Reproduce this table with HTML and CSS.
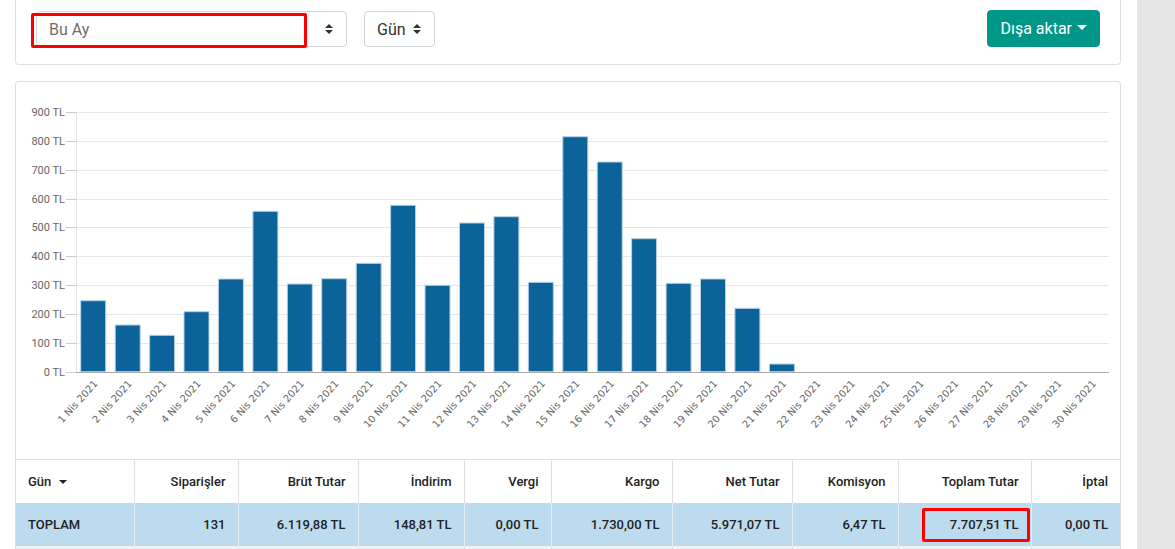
FILE: index.html
```html
<!DOCTYPE html>
<html lang="tr">
<head>
<meta charset="utf-8">
<title>Rapor</title>
<link rel="stylesheet" href="styles.css">
</head>
<body>
<div class="layout">
  <main class="main">
    <section class="toolbar-card">
      <div class="toolbar">
        <div class="select select-period">
          <span class="select-text muted">Bu Ay</span>
          <svg class="updown" width="8" height="10" viewBox="0 0 8 10"><polygon points="4,0 8,4 0,4" fill="#333"/><polygon points="0,6 8,6 4,10" fill="#333"/></svg>
          <span class="highlight-box"></span>
        </div>
        <div class="select select-group">
          <span class="select-text">Gün</span>
          <svg class="updown" width="8" height="10" viewBox="0 0 8 10"><polygon points="4,0 8,4 0,4" fill="#333"/><polygon points="0,6 8,6 4,10" fill="#333"/></svg>
        </div>
        <div class="spacer"></div>
        <button class="export-btn">Dışa aktar<span class="caret"></span></button>
      </div>
    </section>

    <section class="report-card">
      <svg class="chart" width="1104" height="377" viewBox="0 0 1104 377">
        <g class="grid" stroke="#e6e6e6" stroke-width="1">
          <line x1="60" y1="30.5" x2="1093" y2="30.5"/>
          <line x1="60" y1="59.5" x2="1093" y2="59.5"/>
          <line x1="60" y1="88.5" x2="1093" y2="88.5"/>
          <line x1="60" y1="117.5" x2="1093" y2="117.5"/>
          <line x1="60" y1="145.5" x2="1093" y2="145.5"/>
          <line x1="60" y1="174.5" x2="1093" y2="174.5"/>
          <line x1="60" y1="203.5" x2="1093" y2="203.5"/>
          <line x1="60" y1="232.5" x2="1093" y2="232.5"/>
          <line x1="60" y1="261.5" x2="1093" y2="261.5"/>
          <line x1="60.5" y1="30" x2="60.5" y2="290"/>
        </g>
        <g class="ticks" stroke="#ccc" stroke-width="1">
          <line x1="50" y1="30.5" x2="60" y2="30.5"/>
          <line x1="50" y1="59.5" x2="60" y2="59.5"/>
          <line x1="50" y1="88.5" x2="60" y2="88.5"/>
          <line x1="50" y1="117.5" x2="60" y2="117.5"/>
          <line x1="50" y1="145.5" x2="60" y2="145.5"/>
          <line x1="50" y1="174.5" x2="60" y2="174.5"/>
          <line x1="50" y1="203.5" x2="60" y2="203.5"/>
          <line x1="50" y1="232.5" x2="60" y2="232.5"/>
          <line x1="50" y1="261.5" x2="60" y2="261.5"/>
          <line x1="50" y1="290.5" x2="60" y2="290.5"/>
        </g>
        <g class="ylabels" font-family="Roboto, 'Liberation Sans', sans-serif" font-size="11" fill="#666" text-anchor="end">
          <text x="49" y="34">900 TL</text>
          <text x="49" y="63">800 TL</text>
          <text x="49" y="92">700 TL</text>
          <text x="49" y="121">600 TL</text>
          <text x="49" y="149">500 TL</text>
          <text x="49" y="178">400 TL</text>
          <text x="49" y="207">300 TL</text>
          <text x="49" y="236">200 TL</text>
          <text x="49" y="265">100 TL</text>
          <text x="49" y="294">0 TL</text>
        </g>
        <g class="bars" fill="#0b6399" stroke="#b9d2e6" stroke-width="1">
          <rect x="64.7" y="218.7" width="25" height="71"/>
          <rect x="99.2" y="243" width="25" height="46.7"/>
          <rect x="133.6" y="253.3" width="25" height="36.4"/>
          <rect x="168" y="229.7" width="25" height="60"/>
          <rect x="202.4" y="197" width="25" height="92.7"/>
          <rect x="236.9" y="129.3" width="25" height="160.4"/>
          <rect x="271.3" y="202" width="25" height="87.7"/>
          <rect x="305.7" y="196.7" width="25" height="93"/>
          <rect x="340.2" y="181.3" width="25" height="108.4"/>
          <rect x="374.6" y="123.3" width="25" height="166.4"/>
          <rect x="409" y="203.3" width="25" height="86.4"/>
          <rect x="443.5" y="141" width="25" height="148.7"/>
          <rect x="477.9" y="134.7" width="25" height="155"/>
          <rect x="512.3" y="200.3" width="25" height="89.4"/>
          <rect x="546.8" y="54.7" width="25" height="235"/>
          <rect x="581.2" y="80" width="25" height="209.7"/>
          <rect x="615.6" y="156.7" width="25" height="133"/>
          <rect x="650.1" y="201.3" width="25" height="88.4"/>
          <rect x="684.5" y="197" width="25" height="92.7"/>
          <rect x="718.9" y="226.3" width="25" height="63.4"/>
          <rect x="753.4" y="282" width="25" height="7.7"/>
        </g>
        <line x1="60" y1="290.5" x2="1093" y2="290.5" stroke="#aaa" stroke-width="1"/>
        <g class="xlabels" font-family="'DejaVu Sans', Verdana, sans-serif" font-size="10" fill="#666" text-anchor="end">
          <text transform="translate(82.2,302) rotate(-48)">1 Nis 2021</text>
          <text transform="translate(116.6,302) rotate(-48)">2 Nis 2021</text>
          <text transform="translate(151.1,302) rotate(-48)">3 Nis 2021</text>
          <text transform="translate(185.5,302) rotate(-48)">4 Nis 2021</text>
          <text transform="translate(219.9,302) rotate(-48)">5 Nis 2021</text>
          <text transform="translate(254.4,302) rotate(-48)">6 Nis 2021</text>
          <text transform="translate(288.8,302) rotate(-48)">7 Nis 2021</text>
          <text transform="translate(323.2,302) rotate(-48)">8 Nis 2021</text>
          <text transform="translate(357.7,302) rotate(-48)">9 Nis 2021</text>
          <text transform="translate(392.1,302) rotate(-48)">10 Nis 2021</text>
          <text transform="translate(426.5,302) rotate(-48)">11 Nis 2021</text>
          <text transform="translate(461,302) rotate(-48)">12 Nis 2021</text>
          <text transform="translate(495.4,302) rotate(-48)">13 Nis 2021</text>
          <text transform="translate(529.8,302) rotate(-48)">14 Nis 2021</text>
          <text transform="translate(564.3,302) rotate(-48)">15 Nis 2021</text>
          <text transform="translate(598.7,302) rotate(-48)">16 Nis 2021</text>
          <text transform="translate(633.1,302) rotate(-48)">17 Nis 2021</text>
          <text transform="translate(667.6,302) rotate(-48)">18 Nis 2021</text>
          <text transform="translate(702,302) rotate(-48)">19 Nis 2021</text>
          <text transform="translate(736.4,302) rotate(-48)">20 Nis 2021</text>
          <text transform="translate(770.9,302) rotate(-48)">21 Nis 2021</text>
          <text transform="translate(805.3,302) rotate(-48)">22 Nis 2021</text>
          <text transform="translate(839.7,302) rotate(-48)">23 Nis 2021</text>
          <text transform="translate(874.2,302) rotate(-48)">24 Nis 2021</text>
          <text transform="translate(908.6,302) rotate(-48)">25 Nis 2021</text>
          <text transform="translate(943,302) rotate(-48)">26 Nis 2021</text>
          <text transform="translate(977.5,302) rotate(-48)">27 Nis 2021</text>
          <text transform="translate(1011.9,302) rotate(-48)">28 Nis 2021</text>
          <text transform="translate(1046.3,302) rotate(-48)">29 Nis 2021</text>
          <text transform="translate(1080.8,302) rotate(-48)">30 Nis 2021</text>
        </g>
      </svg>

      <table class="report-table">
        <colgroup>
          <col class="w118"><col class="w104"><col class="w120"><col class="w106"><col class="w87">
          <col class="w121"><col class="w120"><col class="w106"><col class="w133"><col class="w89">
        </colgroup>
        <thead>
          <tr>
            <th class="left">Gün <span class="sort-caret"></span></th>
            <th>Siparişler</th>
            <th>Brüt Tutar</th>
            <th>İndirim</th>
            <th>Vergi</th>
            <th>Kargo</th>
            <th>Net Tutar</th>
            <th>Komisyon</th>
            <th>Toplam Tutar</th>
            <th>İptal</th>
          </tr>
        </thead>
        <tbody>
          <tr class="total-row">
            <td class="left">TOPLAM</td>
            <td>131</td>
            <td>6.119,88 TL</td>
            <td>148,81 TL</td>
            <td>0,00 TL</td>
            <td>1.730,00 TL</td>
            <td>5.971,07 TL</td>
            <td>6,47 TL</td>
            <td class="marked"><span class="mark-box"></span>7.707,51 TL</td>
            <td>0,00 TL</td>
          </tr>
          <tr class="next-row">
            <td></td><td></td><td></td><td></td><td></td><td></td><td></td><td></td><td></td><td></td>
          </tr>
        </tbody>
      </table>
    </section>
  </main>
  <aside class="side"></aside>
</div>
</body>
</html>
```
FILE: styles.css
```css
* { box-sizing: border-box; }
html, body { margin: 0; padding: 0; height: 100%; overflow: hidden; }
body {
  font-family: Roboto, "Liberation Sans", Arial, sans-serif;
  background: #fff;
  color: #212529;
}
.layout { display: flex; height: 549px; overflow: hidden; }
.main { width: 1137px; padding: 0 16px 0 15px; flex: none; overflow: hidden; }
.side { flex: 1; background: #e5e5e5; }

.toolbar-card {
  border: 1px solid #dfdfdf;
  border-top: none;
  border-radius: 0 0 4px 4px;
  padding: 11px 20px 17px;
}
.toolbar { display: flex; align-items: center; height: 36px; }
.select {
  position: relative;
  height: 36px;
  border: 1px solid #ced4da;
  border-radius: 4px;
  display: flex;
  align-items: center;
  padding: 0 12px 0 12px;
  font-size: 16px;
  background: #fff;
}
.select-period { width: 311px; justify-content: space-between; }
.select-group { width: 71px; margin-left: 17px; justify-content: space-between; }
.select-text { color: #333; }
.select-text.muted { color: #6f6f6f; }
.updown { display: block; margin-right: 1px; }
.highlight-box {
  position: absolute;
  left: -6px;
  top: 1px;
  width: 276px;
  height: 35px;
  border: 3px solid #ff0000;
  border-radius: 2px;
  pointer-events: none;
}
.spacer { flex: 1; }
.export-btn {
  height: 37px;
  margin-top: -1px;
  background: #009688;
  color: #fff;
  border: 1px solid #009688;
  border-radius: 4px;
  font-family: inherit;
  font-size: 16px;
  padding: 0 12px 0 12px;
  display: flex;
  align-items: center;
}
.caret {
  display: inline-block;
  margin-left: 5px;
  width: 0; height: 0;
  border-left: 5px solid transparent;
  border-right: 5px solid transparent;
  border-top: 5px solid #fff;
  position: relative;
  top: -1px;
}

.report-card {
  margin-top: 16px;
  border: 1px solid #dfdfdf;
  border-bottom: none;
  border-radius: 4px 4px 0 0;
}
.chart { display: block; }

.report-table {
  width: 1104px;
  table-layout: fixed;
  border-collapse: collapse;
  font-size: 13px;
  font-weight: 500;
  color: #222;
}
.w118 { width: 118px; } .w104 { width: 104px; } .w120 { width: 120px; }
.w106 { width: 106px; } .w87 { width: 87px; } .w121 { width: 121px; }
.w133 { width: 133px; } .w89 { width: 89px; }
.report-table th, .report-table td {
  height: 43px;
  padding: 0 12px;
  text-align: right;
  border-left: 1px solid #e0e0e0;
  white-space: nowrap;
  font-weight: 500;
}
.report-table tr > :first-child { border-left: none; }
.report-table thead tr { border-top: 1px solid #e0e0e0; }
.report-table th { background: #fff; }
.report-table .left { text-align: left; }
.sort-caret {
  display: inline-block;
  width: 0; height: 0;
  border-left: 4px solid transparent;
  border-right: 4px solid transparent;
  border-top: 4px solid #222;
  margin-left: 4px;
  position: relative;
  top: -2px;
}
.total-row td { background: #bddbee; border-left-color: #e3eef6; }
.total-row td.left { border-left: none; }
.next-row td { background: #f2f2f2; }
.marked { position: relative; }
.mark-box {
  position: absolute;
  left: 23px;
  right: 1px;
  top: 5px;
  bottom: 4px;
  border: 3px solid #ff0000;
  border-radius: 2px;
}
```
